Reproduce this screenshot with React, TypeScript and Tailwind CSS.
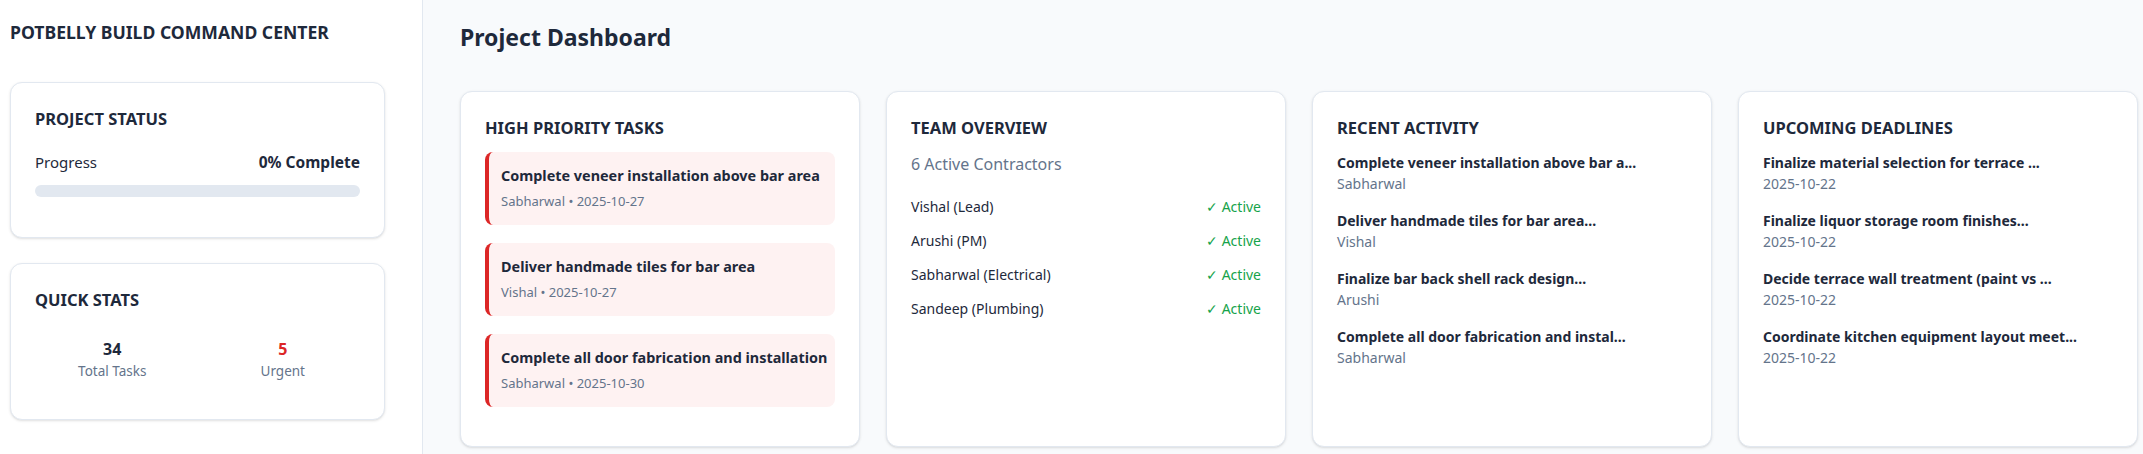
import React from "react";

const tasks = [
  { title: "Complete veneer installation above bar area", who: "Sabharwal", date: "2025-10-27" },
  { title: "Deliver handmade tiles for bar area", who: "Vishal", date: "2025-10-27" },
  { title: "Complete all door fabrication and installation", who: "Sabharwal", date: "2025-10-30" },
];

const team = ["Vishal (Lead)", "Arushi (PM)", "Sabharwal (Electrical)", "Sandeep (Plumbing)"];

const activity = [
  { title: "Complete veneer installation above bar a...", sub: "Sabharwal" },
  { title: "Deliver handmade tiles for bar area...", sub: "Vishal" },
  { title: "Finalize bar back shell rack design...", sub: "Arushi" },
  { title: "Complete all door fabrication and instal...", sub: "Sabharwal" },
];

const deadlines = [
  { title: "Finalize material selection for terrace ...", sub: "2025-10-22" },
  { title: "Finalize liquor storage room finishes...", sub: "2025-10-22" },
  { title: "Decide terrace wall treatment (paint vs ...", sub: "2025-10-22" },
  { title: "Coordinate kitchen equipment layout meet...", sub: "2025-10-22" },
];

function Card({ title, children }: { title: string; children?: React.ReactNode }) {
  return (
    <div className="w-[400px] rounded-xl border border-[#e2e8f0] bg-white p-6 shadow-sm">
      <h3 className="mb-3 text-[16.5px] font-bold leading-6 text-[#1e293b]">{title}</h3>
      {children}
    </div>
  );
}

function ItemList({ items }: { items: { title: string; sub: string }[] }) {
  return (
    <div className="flex flex-col gap-[16px]">
      {items.map((it) => (
        <div key={it.title}>
          <div className="text-[14px] font-bold leading-[21px] text-[#1e293b]">{it.title}</div>
          <div className="text-[14px] leading-[21px] text-[#64748b]">{it.sub}</div>
        </div>
      ))}
    </div>
  );
}

export default function App() {
  return (
    <div className="flex min-h-screen font-['Noto_Sans',sans-serif] text-[#1e293b]">
      <aside className="w-[423px] shrink-0 border-r border-[#e2e8f0] bg-white pl-[10px] pt-[20px]">
        <h1 className="mb-[38px] text-[17.6px] font-bold leading-6 text-[#1e293b]">
          POTBELLY BUILD COMMAND CENTER
        </h1>

        <div className="mb-[25px] w-[375px] rounded-xl border border-[#e2e8f0] bg-white p-6 shadow-sm">
          <h3 className="mb-5 text-[16.5px] font-bold leading-6">PROJECT STATUS</h3>
          <div className="mb-3 flex items-center justify-between text-[15px] leading-[22px]">
            <span>Progress</span>
            <span className="text-[15.5px] font-bold">0% Complete</span>
          </div>
          <div className="mb-4 h-3 w-full rounded-full bg-[#e2e8f0]">
            <div className="h-3 rounded-full bg-[#22c55e]" style={{ width: "0%" }} />
          </div>
        </div>

        <div className="w-[375px] rounded-xl border border-[#e2e8f0] bg-white p-6 pb-[38px] shadow-sm">
          <h3 className="mb-[25px] text-[16.5px] font-bold leading-6">QUICK STATS</h3>
          <div className="grid grid-cols-2 gap-4 text-center">
            <div>
              <div className="text-[16px] font-bold leading-6">34</div>
              <div className="text-[13.5px] leading-5 text-[#64748b]">Total Tasks</div>
            </div>
            <div>
              <div className="text-[16px] font-bold leading-6 text-[#dc2626]">5</div>
              <div className="text-[13.5px] leading-5 text-[#64748b]">Urgent</div>
            </div>
          </div>
        </div>
      </aside>

      <main className="flex-1 bg-[#f8fafc] pl-[37px] pt-[21px]">
        <h2 className="mb-[38px] text-[23px] font-bold leading-8 text-[#1e293b]">Project Dashboard</h2>

        <div className="flex items-stretch gap-[26px]">
          <Card title="HIGH PRIORITY TASKS">
            <div className="flex flex-col gap-[18px] pb-[15px]">
              {tasks.map((t) => (
                <div
                  key={t.title}
                  className="h-[73px] rounded-lg border-l-4 border-[#dc2626] bg-[#fef2f2] pl-3 pt-[13px]"
                >
                  <div className="text-[14.4px] font-bold leading-[22px] text-[#1e293b]">{t.title}</div>
                  <div className="mt-[5px] text-[13px] leading-[18px] text-[#64748b]">
                    {t.who} • {t.date}
                  </div>
                </div>
              ))}
            </div>
          </Card>

          <Card title="TEAM OVERVIEW">
            <div className="mb-[14px] text-[16px] leading-6 text-[#64748b]">6 Active Contractors</div>
            {team.map((m) => (
              <div key={m} className="flex items-center justify-between py-[7px] text-[14px] leading-5">
                <span className="text-[#1e293b]">{m}</span>
                <span className="text-[#16a34a]">✓ Active</span>
              </div>
            ))}
          </Card>

          <Card title="RECENT ACTIVITY">
            <ItemList items={activity} />
          </Card>

          <Card title="UPCOMING DEADLINES">
            <ItemList items={deadlines} />
          </Card>
        </div>
      </main>
    </div>
  );
}
